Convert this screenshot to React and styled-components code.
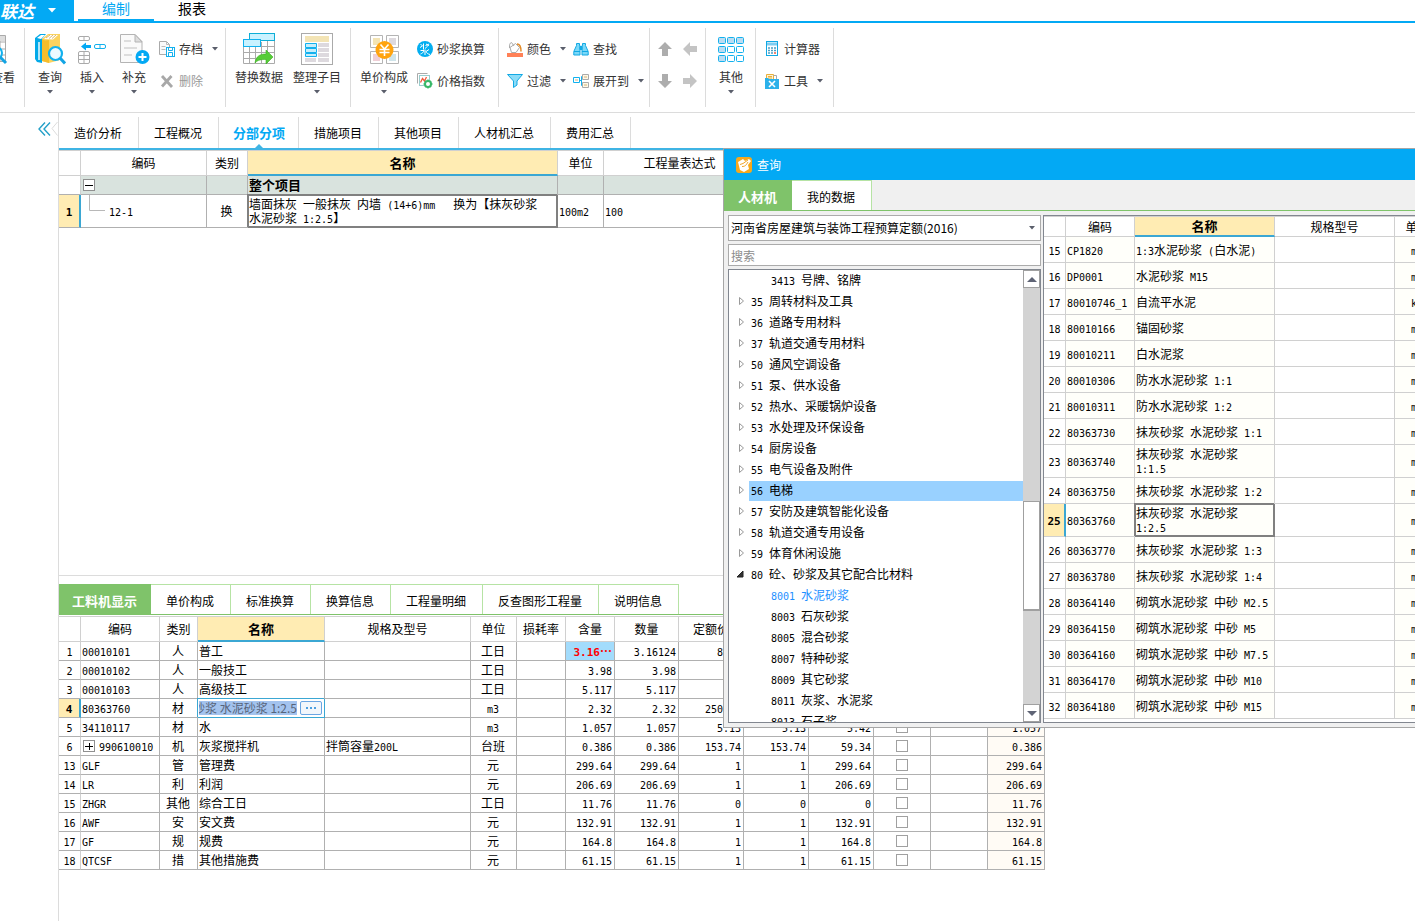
import React, { useEffect, useRef, useState } from 'react';
import styled, { createGlobalStyle, css } from 'styled-components';

const GlobalStyle = createGlobalStyle`
  * {
    box-sizing: border-box;
  }
  body {
    margin: 0;
    background: #fff;
    color: #000;
    font-family: 'Noto Sans CJK SC', sans-serif;
    font-size: 12px;
    line-height: 14px;
  }
  button, input, select {
    font: inherit;
    color: inherit;
    border: 0;
    padding: 0;
    margin: 0;
    background: none;
    border-radius: 0;
    outline: 0;
  }
  ul {
    list-style: none;
    margin: 0;
    padding: 0;
  }
`;

const BLUE = '#03a9f4';
const GREEN = '#7fc36a';
const LIGHT_GREEN = '#b6e3a4';
const YELLOW = '#ffecb3';
const MARK = '#3ba7d3';

const Latin = styled.span`
  font-family: 'DejaVu Sans Mono', monospace;
  font-size: ${({ $bold }) => ($bold ? 11 : 10)}px;
  line-height: 1;
`;

// latin runs use a half-width face so they line up with the hanzi
const Text = ({ children, bold }) =>
  String(children)
    .split(/([\x20-\x7e]+)/)
    .map((part, idx) =>
      idx % 2 ? (
        <Latin key={idx} $bold={bold}>
          {part}
        </Latin>
      ) : (
        part
      )
    );

const Page = styled.div`
  position: relative;
  display: flex;
  flex-direction: column;
  min-height: 100vh;
  overflow: hidden;
`;

/* ---------- top bar ---------- */

const TopBar = styled.header`
  display: flex;
  height: 23px;
  border-bottom: 2px solid ${BLUE};
`;

const Logo = styled.button`
  display: flex;
  align-items: center;
  justify-content: flex-end;
  width: 74px;
  height: 21px;
  padding-right: 18px;
  gap: 14px;
  background: ${BLUE};
  color: #fff;
  font-size: 17px;
  line-height: 20px;
  font-weight: 700;
  font-style: italic;
  white-space: nowrap;
  overflow: hidden;
`;

const TopTab = styled.button`
  width: 76px;
  height: 23px;
  margin-left: ${({ $active }) => ($active ? 4 : 0)}px;
  padding-bottom: 3px;
  font-size: 14px;
  line-height: 16px;
  color: ${({ $active }) => ($active ? BLUE : '#000')};
  border-bottom: ${({ $active }) => ($active ? `4px solid ${BLUE}` : '4px solid transparent')};
`;

/* ---------- ribbon ---------- */

const Ribbon = styled.nav`
  display: flex;
  height: 90px;
  padding: 5px 0;
  border-bottom: 1px solid #dcdcdc;
  overflow: hidden;
  color: #333;
`;

const Group = styled.div`
  display: flex;
  flex: none;
  width: ${({ $width }) => $width}px;
  padding: 5px 0 0 4px;
  border-right: 1px solid #dcdcdc;
`;

const CutGroup = styled(Group)`
  justify-content: flex-end;
  padding-right: 8px;
  overflow: hidden;
`;

const BigButton = styled.button`
  display: flex;
  flex: none;
  flex-direction: column;
  align-items: center;
  width: ${({ $width }) => $width || 42}px;
  height: 68px;
  white-space: nowrap;

  svg {
    flex: none;
  }
  span {
    margin: 5px 0 6px;
    line-height: 14px;
  }
`;

const Column = styled.div`
  display: flex;
  flex-direction: column;
  margin-left: ${({ $gap }) => $gap || 4}px;
`;

const SmallButton = styled.button`
  display: flex;
  align-items: center;
  gap: 4px;
  height: 32px;
  white-space: nowrap;
  color: ${({ disabled }) => (disabled ? '#999' : '#333')};

  span {
    margin-right: 5px;
  }
`;

const ArrowButton = styled.button`
  display: flex;
  align-items: center;
  justify-content: center;
  width: 25px;
  height: 32px;
`;

const ArrowPair = styled.div`
  width: 25px;

  &:first-child {
    margin-left: -2px;
  }
`;

/* ---------- body ---------- */

const Body = styled.div`
  display: flex;
  flex: 1;
`;

const Gutter = styled.aside`
  display: flex;
  align-items: flex-start;
  justify-content: flex-end;
  flex: none;
  width: 59px;
  padding: 8px 0 0;
  border-right: 1px solid #dcdcdc;

  button {
    height: 16px;
  }
`;

const Main = styled.main`
  flex: 1;
  min-width: 0;
`;

const MainTabs = styled.div`
  display: flex;
  height: 37px;
  padding-top: 4px;
  border-bottom: 2px solid #3fb4e4;
`;

const MainTab = styled.button`
  position: relative;
  padding: 0 16px 0 15px;
  height: 31px;
  border-right: 1px solid #dcdcdc;
  line-height: 30px;
  white-space: nowrap;
  ${({ $active }) =>
    $active &&
    css`
      padding: 0 13px 0 14px;
      color: ${BLUE};
      font-size: 13px;
      font-weight: 700;

      &::after {
        content: '';
        position: absolute;
        left: 36px;
        bottom: 0;
        border: 4px solid transparent;
        border-top: 0;
        border-bottom-color: #3fb4e4;
      }
    `}
`;

const UpperPane = styled.section`
  height: 426px;
  border-bottom: 1px solid #dcdcdc;
  overflow: hidden;
`;

const LowerPane = styled.section`
  padding-top: 8px;
`;

const GreenTabs = styled.div`
  display: flex;
  height: 31px;
  margin-bottom: 1px;
  border-bottom: 1px solid ${GREEN};
`;

const GreenTab = styled.button`
  min-width: 68px;
  padding: 2px 16px 0 15px;
  border-top: 1px solid ${LIGHT_GREEN};
  border-right: 1px solid ${LIGHT_GREEN};
  background: #fff;
  white-space: nowrap;
  ${({ $active }) =>
    $active &&
    css`
      padding: 2px 13px 0;
      border-color: ${GREEN};
      background: ${GREEN};
      color: #fff;
      font-size: 13px;
      font-weight: 700;
    `}
`;

const Grid = styled.table`
  table-layout: fixed;
  width: ${({ $width }) => ($width ? `${$width}px` : '100%')};
  border-collapse: separate;
  border-spacing: 0;
  border-top: 1px solid #d0d0d0;
`;

const Head = styled.th`
  height: ${({ $height }) => $height || 25}px;
  padding: 0;
  font-weight: 400;
  white-space: nowrap;
  overflow: hidden;
  border-right: 1px solid #d0d0d0;
  border-bottom: 1px solid #d0d0d0;
  ${({ $active }) =>
    $active &&
    css`
      background: ${YELLOW};
      border-bottom: 2px solid ${MARK};
      font-size: 13px;
      font-weight: 700;
    `}
`;

const Cell = styled.td`
  height: ${({ $height }) => $height || 19}px;
  padding: 0 2px 0 1px;
  overflow: hidden;
  white-space: pre;
  text-align: ${({ $align }) => $align || 'left'};
  background: ${({ $bg }) => $bg || '#fff'};
  border-right: 1px solid ${({ $line }) => $line || '#b0b0b0'};
  border-bottom: 1px solid ${({ $line }) => $line || '#b0b0b0'};
`;

const RowNo = styled(Cell)`
  padding: 0;
  text-align: center;
  background: #fff;
  border-right-color: #d0d0d0;
  ${({ $active }) =>
    $active &&
    css`
      background: ${YELLOW};
      border-right: 2px solid ${MARK};
      font-weight: 700;
    `}
`;

const FocusCell = styled(Cell)`
  border-color: #808080;
  box-shadow: -1px -1px 0 #808080, inset 1px 1px 0 #808080, inset -1px -1px 0 #808080;
`;

const ChangedCell = styled(Cell)`
  background: #a3dcfc;
  color: #f00;
  font-weight: 700;
`;

const SumCell = styled(Cell)`
  font-size: 13px;
  font-weight: 700;
`;

const EditCell = styled(Cell)`
  border-color: ${MARK};
  box-shadow: -1px -1px 0 ${MARK};

  > div {
    display: flex;
    align-items: center;
    gap: 3px;
  }
  input {
    flex: 1;
    min-width: 0;
    height: 14px;
    background: #a3c3ee;
    color: #57647a;
  }
  button {
    display: flex;
    align-items: center;
    justify-content: center;
    gap: 2px;
    width: 22px;
    height: 14px;
    border: 1px solid #6aa5e3;
    border-radius: 2px;
    background: #f2f6fb;
  }
  i {
    width: 2px;
    height: 2px;
    background: #4d9fe0;
  }
`;

const Branch = styled.div`
  display: flex;
  align-items: center;
  gap: 4px;
  padding-left: ${({ $indent }) => $indent || 0}px;
`;

const Toggle = styled.button`
  display: flex;
  flex: none;
  align-items: center;
  justify-content: center;
  width: 12px;
  height: 12px;
  margin-left: 1px;
  border: 1px solid #909090;
  background: #fff;
`;

const Check = styled.input`
  appearance: none;
  display: block;
  width: 12px;
  height: 12px;
  margin: 0 auto;
  border: 1px solid #a0a0a0;
  background: #fff;
`;

/* ---------- query window ---------- */

const Dialog = styled.section`
  position: absolute;
  top: 148px;
  left: 723px;
  right: 0;
  display: flex;
  flex-direction: column;
  height: 580px;
  border: 1px solid #a6a6a6;
  border-right: 0;
  background: #f0f0f0;
  overflow: hidden;
`;

const TitleBar = styled.div`
  display: flex;
  align-items: center;
  gap: 5px;
  flex: none;
  height: 31px;
  padding-left: 12px;
  background: ${BLUE};
  color: #fff;
`;

const Panes = styled.div`
  display: flex;
  flex: 1;
  min-height: 0;
  gap: 2px;
  padding: 3px 0 4px 4px;
`;

const Side = styled.div`
  display: flex;
  flex: none;
  flex-direction: column;
  gap: 3px;
  width: 313px;
`;

const Field = styled.label`
  display: flex;
  align-items: center;
  flex: none;
  height: ${({ $height }) => $height}px;
  padding: 0 5px 0 2px;
  border: 1px solid #ababab;
  background: #fff;

  select, input {
    flex: 1;
    min-width: 0;
    height: 100%;
    appearance: none;
  }
  input::placeholder {
    color: #8c8c8c;
    opacity: 1;
  }
`;

const TreeBox = styled.div`
  display: flex;
  flex: 1;
  min-height: 0;
  border: 1px solid #828790;
  background: #fff;
`;

const Tree = styled.ul`
  flex: 1;
  overflow: hidden;
`;

const Node = styled.li`
  display: flex;
  align-items: flex-end;
  height: 21px;
  padding-left: ${({ $child }) => ($child ? 20 : 0)}px;
  white-space: pre;

  > svg {
    flex: none;
    margin: 0 4px 6px 7px;
  }
  > span {
    flex: 1;
    height: 20px;
    padding-left: ${({ $child }) => ($child ? 22 : 2)}px;
    line-height: 18px;
    color: ${({ $linked }) => ($linked ? '#1e90ff' : '#000')};
    background: ${({ $selected }) => ($selected ? '#99d1ff' : 'transparent')};
  }
`;

const ScrollBar = styled.div`
  display: flex;
  flex: none;
  flex-direction: column;
  width: 17px;
  background: #d3d3d3;

  button {
    display: flex;
    align-items: center;
    justify-content: center;
    height: 18px;
    border: 1px solid #a0a0a0;
    background: #fff;
  }
`;

const Thumb = styled.div`
  height: 110px;
  border: 1px solid #a0a0a0;
  border-bottom-width: 2px;
  background: #fff;
`;

const Track = styled.div`
  flex: ${({ $grow }) => $grow};
`;

const ResultBox = styled.div`
  flex: 1;
  min-width: 0;
  border: 1px solid #828790;
  border-right: 0;
  background: #fff;
  overflow: hidden;
`;

/* ---------- icons ---------- */

const Caret = ({ color = '#5a5e6b' }) => (
  <svg width='6' height='4' viewBox='0 0 6 4'>
    <path d='M0 0h6L3 3.5z' fill={color} />
  </svg>
);

const BooksIcon = () => (
  <svg width='32' height='32' viewBox='0 0 32 32'>
    <path d='M1 5l5-4h6L8 6v24l-5-1-2-3z' fill='#03a9e8' />
    <path d='M3 5l4-3h4L7 6z' fill='#fff' />
    <path d='M5 9v18' stroke='#fff' strokeWidth='1.4' />
    <path d='M8 6l6-5h12v26l-11 3-7-2z' fill='#fbd35f' />
    <path d='M8 6l3 1.500 4-.5v23l-7-2z' fill='#f6bd2c' />
    <path d='M10 6l5-4h9l-5 4.500z' fill='#fff' />
    <path d='M12 5l4-3M15 5.500l4-3.500M18 5.500l4-3.500' stroke='#d2a647' strokeWidth='.8' />
    <circle cx='21.500' cy='20.500' r='6.500' fill='#eefaff' stroke='#12b1ee' strokeWidth='2.200' />
    <path d='M26 25l5 5.500' stroke='#12a4e4' strokeWidth='3' />
  </svg>
);

const InsertIcon = () => (
  <svg width='30' height='32' viewBox='0 0 30 32' fill='none'>
    <rect x='1.500' y='3.500' width='11' height='4' rx='1.500' stroke='#aaa' />
    <path d='M7 3.500v4' stroke='#aaa' />
    <rect x='1.500' y='18.500' width='11' height='12' rx='1.500' stroke='#aaa' />
    <path d='M7 18.500v12M1.500 22.500h11M1.500 26.500h11' stroke='#aaa' />
    <rect x='17.500' y='11.500' width='11' height='4' rx='1.500' stroke='#12b1ee' />
    <path d='M23 11.500v4' stroke='#12b1ee' />
    <path d='M4 13.500l5-4v2.500h5v3H9v2.500z' fill='#03a9f4' />
  </svg>
);

const AddDocIcon = () => (
  <svg width='32' height='32' viewBox='0 0 32 32' fill='none'>
    <path d='M2.500 1.500h14.500l7 7v21h-21.500z' fill='#fafafa' stroke='#b4b4b4' />
    <path d='M17 1.500l7 7.500h-7z' fill='#ddd' stroke='#b4b4b4' />
    <path d='M6 8h7M6 15h13M6 22h8' stroke='#d4d4d4' strokeWidth='1.500' />
    <circle cx='24.500' cy='24' r='7' fill='#03a9f4' />
    <path d='M24.500 20v8M20.500 24h8' stroke='#fff' strokeWidth='2' />
  </svg>
);

const SheetIcon = () => (
  <svg width='30' height='32' viewBox='0 0 30 32' fill='none'>
    <path d='M0 2.500h17.500v26H0M0 9h17M0 16h17M0 22h17M12 3v25' stroke='#aaa' />
    <path d='M0 3h17v5H0z' fill='#ddd' />
    <circle cx='8' cy='20' r='6' fill='#eefaff' stroke='#12b1ee' strokeWidth='2' />
    <path d='M12 24l6 6' stroke='#12a4e4' strokeWidth='3' />
  </svg>
);

const SaveIcon = () => (
  <svg width='16' height='16' viewBox='0 0 16 16' fill='none'>
    <path d='M.5.500h7l3 3v10H.500z' fill='#fafafa' stroke='#aaa' />
    <path d='M7.500.500v3h3M2.500 5.500h4M2.500 8.500h4' stroke='#bbb' />
    <rect x='7.500' y='6.500' width='8' height='9' fill='#fff' stroke='#12b1ee' />
    <path d='M9.500 6.500v3h4v-3M9.500 15v-3.500h4V15' stroke='#12b1ee' />
  </svg>
);

const DeleteIcon = () => (
  <svg width='16' height='16' viewBox='0 0 16 16' fill='none'>
    <path d='M3 3l10 11M12.500 3L3 13.500' stroke='#a8a8a8' strokeWidth='2.800' />
  </svg>
);

const ReplaceIcon = () => (
  <svg width='32' height='32' viewBox='0 0 32 32' fill='none'>
    <path d='M.5 13.500v17h31v-25M.5 19.500h31M.5 25.500h24M6.500 14v17M12.500 14v17M18.500 9v22M24.500 8v23M18.500 13.500h13' stroke='#aaa' />
    <rect x='6.500' y='.5' width='25' height='7' fill='#c9f2ff' stroke='#0eaed6' />
    <rect x='.5' y='6.500' width='17' height='7' fill='#c9f2ff' stroke='#12b1ee' />
    <path d='M12 30c1-7 5-9 11-9v-4l7 7-7 7v-4.500c-4 0-8 0-11 3.500z' fill='#56cc38' stroke='#3bb01f' strokeWidth='.6' />
  </svg>
);

const ArrangeIcon = () => (
  <svg width='32' height='32' viewBox='0 0 32 32' fill='none'>
    <rect x='.5' y='.5' width='31' height='31' fill='#fff' stroke='#aaa' />
    <path d='M4 3h24v6H4z' fill='#f3e4b5' />
    <path d='M17 10h11v4H17zM17 15h11v4H17zM17 20h11v4H17zM4 25h11v4H4zM17 25h11v4H17z' fill='#ddd9de' />
    <path d='M4.500 10.500h11v4h-11zM4.500 15.500h11v4h-11zM4.500 20.500h11v3h-11z' fill='#c6eefc' stroke='#12b1ee' />
  </svg>
);

const PriceIcon = () => (
  <svg width='32' height='32' viewBox='0 0 32 32' fill='none'>
    <path d='M2.500 2.500h12v12h-12zM18.500 2.500h12v12h-12zM2.500 18.500h12v12h-12zM18.500 18.500h12v12h-12z' fill='#fff' stroke='#b4b4b4' />
    <path d='M5 5h7v7H5z' fill='#f3e4b5' />
    <path d='M21 5h7v7h-7z' fill='#ddd9de' />
    <path d='M5 21h7v7H5z' fill='#efcfd6' />
    <path d='M21 21h7v7h-7z' fill='#cfe4ea' />
    <circle cx='16.500' cy='17' r='9' fill='#ffa40f' />
    <path d='M12.500 11.500l4 4.500 4-4.500M11.500 16.500h10M11.500 19.500h10M16.500 16v7' stroke='#fff' strokeWidth='1.600' />
  </svg>
);

const MortarIcon = () => (
  <svg width='16' height='16' viewBox='0 0 16 16' fill='none'>
    <circle cx='8' cy='8' r='8' fill='#03aef0' />
    <path
      d='M3.500 3.500l2 1M3 6.500l2.500-1.500M6.500 2.500v6M8.500 4.500c2-.5 3-1.500 3-1.500s1 1-3.500 4.500M9 3l3 1.500M8 8.500v5.500M3.500 9.500h3.500c-.5 2-2 3-3.500 3.500M12 8.500l-3 2c1 2 2 2.500 4 3'
      stroke='#fff'
    />
  </svg>
);

const IndexIcon = () => (
  <svg width='16' height='16' viewBox='0 0 16 16' fill='none'>
    <path d='M.5 10.500v-10h10' stroke='#aaa' />
    <rect x='2.500' y='2.500' width='10' height='10' fill='#fff' stroke='#9cc' />
    <path d='M3.500 9.500l2-4 2 2.500 2-4' stroke='#f05a3c' strokeWidth='1.300' />
    <circle cx='11' cy='11' r='3' fill='#fff' stroke='#38b768' strokeWidth='2' />
    <path d='M11 6.500v1.500M11 14v1.500M6.500 11H8M14 11h1.500M8 8l1 1M13 13l1 1M14 8l-1 1M8 14l1-1' stroke='#38b768' strokeWidth='1.400' />
  </svg>
);

const PaintIcon = () => (
  <svg width='16' height='16' viewBox='0 0 16 16' fill='none'>
    <path d='M3 6.500l5.500-4 4 4L9 11.500H4.500z' fill='#fff' stroke='#aaa' />
    <path d='M2.500 7c0-3 0-5 2-5.500L7 5' stroke='#aaa' />
    <path d='M10 3c3 0 4 2 4 7.500' stroke='#e48a24' strokeWidth='1.500' />
    <path d='M0 12h16v4H0z' fill='#ff8157' />
  </svg>
);

const FilterIcon = () => (
  <svg width='16' height='16' viewBox='0 0 16 16'>
    <path d='M.5 1.500h15L10 8v4l-3.500 2.500V8z' fill='#8bdcf8' stroke='#12a9e4' />
  </svg>
);

const FindIcon = () => (
  <svg width='16' height='16' viewBox='0 0 16 16'>
    <path d='M3.500 4.500v-2h3v2h.5V14H.800v-3.500zM9 4.500h.5v-2h3v2l2.700 6V14H9z' fill='#7bd8f8' stroke='#12a9e4' />
    <path d='M7 5.500h2v3H7z' fill='#12a9e4' stroke='#12a9e4' />
    <path d='M1 10.500h6M9 10.500h6' stroke='#12a9e4' />
  </svg>
);

const ExpandIcon = () => (
  <svg width='16' height='16' viewBox='0 0 16 16' fill='none'>
    <path d='M6.500 7.500h2M8.500 3.500v9M8.500 3.500h1M8.500 12.500h1' stroke='#12b1ee' />
    <path d='M.5 4.500h6v5h-6z' fill='#fff' stroke='#12b1ee' />
    <path d='M9.500 1.500h6v5h-6zM9.500 9.500h6v5h-6z' fill='#fff8e5' stroke='#aaa' />
    <path d='M2 7h3M11 4h3M11 12h3' stroke='#d2b27c' />
  </svg>
);

const MoveIcon = ({ turn, color }) => (
  <svg width='16' height='16' viewBox='0 0 16 16'>
    <path d='M8 1l7 7h-4v7H5V8H1z' fill={color} transform={`rotate(${turn} 8 8)`} />
  </svg>
);

const OtherIcon = () => (
  <svg width='28' height='32' viewBox='0 0 28 32'>
    {[0, 1, 2].map((row) =>
      [0, 1, 2].map((col) => (
        <rect
          key={`${row}${col}`}
          x={1.5 + col * 9}
          y={4.5 + row * 9}
          width='7'
          height='6'
          rx='1'
          stroke='#12b1ee'
          fill={row === 0 || col === 0 ? '#bcdcf2' : '#fff'}
        />
      ))
    )}
  </svg>
);

const CalcIcon = () => (
  <svg width='16' height='16' viewBox='0 0 16 16' fill='none'>
    <rect x='2.500' y='.5' width='11' height='14' fill='#fff' stroke='#12a9e4' />
    <path d='M3 3h10' stroke='#7fcdf1' strokeWidth='3' />
    <path d='M4 7h2M7 7h2M10 7h2M4 9.500h2M7 9.500h2M10 9.500h2M4 12h2M7 12h2' stroke='#4b9fc4' strokeWidth='1.300' />
    <path d='M10 12h2' stroke='#ef5a43' strokeWidth='1.500' />
  </svg>
);

const ToolIcon = () => (
  <svg width='16' height='16' viewBox='0 0 16 16' fill='none'>
    <path d='M2.500 6V1.500h7V6' fill='#fff3d5' stroke='#e9b03a' />
    <path d='M4 3.500h4M4 5h4' stroke='#e9b03a' />
    <path d='M9.500 2.500h3V6' stroke='#aaa' />
    <path d='M1 5h3l1 1h10v10H1z' fill='#2bb1ea' />
    <path d='M5 8l6 6M11 8l-6 6' stroke='#fff' strokeWidth='1.600' />
  </svg>
);

const CollapseIcon = () => (
  <svg width='20' height='16' viewBox='0 0 20 16' fill='none'>
    <path d='M7 1.500L1 8l6 6.500M12 1.500L6 8l6 6.500' stroke='#24a0c8' strokeWidth='1.400' />
    <path d='M19.500 1L14 7.500l5.500 7' stroke='#dcdcdc' />
  </svg>
);

const WindowIcon = () => (
  <svg width='16' height='16' viewBox='0 0 16 16' fill='none'>
    <rect width='16' height='16' rx='3' fill='#f6a81c' />
    <path d='M2 5l5-3 2 2 4-2 2 2-3 4 1 4-5 3-4-2-1-4z' fill='#fff' />
    <path d='M4 7.500l3-1 5-3.500M6 9.500c3 0 4-1 6-4.500' stroke='#f0a427' />
  </svg>
);

const TreeArrow = ({ open }) => (
  <svg width='9' height='10' viewBox='0 0 9 10'>
    {open ? <path d='M7 2v6H1z' fill='#333' stroke='#222' /> : <path d='M3.500 1.500L7.500 5l-4 3.500z' fill='#fff' stroke='#999' />}
  </svg>
);

const SignIcon = ({ plus }) => (
  <svg width='8' height='8' viewBox='0 0 8 8'>
    <path d={plus ? 'M0 4.500h8M4 1v7' : 'M0 4.500h8'} stroke='#000' shapeRendering='crispEdges' />
  </svg>
);

const BranchLine = () => (
  <svg width='16' height='32' viewBox='0 0 16 32'>
    <path d='M.5 0v15.500H16' fill='none' stroke='#b8b8b8' />
  </svg>
);

/* ---------- data ---------- */

const mainTabs = ['造价分析', '工程概况', '分部分项', '措施项目', '其他项目', '人材机汇总', '费用汇总'];
const detailTabs = ['工料机显示', '单价构成', '标准换算', '换算信息', '工程量明细', '反查图形工程量', '说明信息'];

const upperCols = [22, 126, 41, 310, 46, 152];
const upperHeads = ['', '编码', '类别', '名称', '单位', '工程量表达式', ''];

const detailCols = [22, 79, 38, 127, 146, 46, 49, 49, 64, 65, 65, 65, 57, 57, 57];
const detailHeads = ['', '编码', '类别', '名称', '规格及型号', '单位', '损耗率', '含量', '数量', '定额价', '市场价', '合价', '是否暂估', '锁定数量', '原始含量'];

// no, code, kind, name, spec, unit, amount, quantity, base price, market price, total
const detailRows = [
  ['1', '00010101', '人', '普工', '', '工日', '3.16…', '3.16124', '87.1', '87.1', '275.34', '3.16124'],
  ['2', '00010102', '人', '一般技工', '', '工日', '3.98', '3.98', '134', '134', '533.32', '3.98'],
  ['3', '00010103', '人', '高级技工', '', '工日', '5.117', '5.117', '201', '201', '1028.52', '5.117'],
  ['4', '80363760', '材', '抹灰砂浆 水泥砂浆 1:2.5', '', 'm3', '2.32', '2.32', '250.35', '250.35', '580.81', '2.32'],
  ['5', '34110117', '材', '水', '', 'm3', '1.057', '1.057', '5.13', '5.13', '5.42', '1.057'],
  ['6', '990610010', '机', '灰浆搅拌机', '拌筒容量200L', '台班', '0.386', '0.386', '153.74', '153.74', '59.34', '0.386'],
  ['13', 'GLF', '管', '管理费', '', '元', '299.64', '299.64', '1', '1', '299.64', '299.64'],
  ['14', 'LR', '利', '利润', '', '元', '206.69', '206.69', '1', '1', '206.69', '206.69'],
  ['15', 'ZHGR', '其他', '综合工日', '', '工日', '11.76', '11.76', '0', '0', '0', '11.76'],
  ['16', 'AWF', '安', '安文费', '', '元', '132.91', '132.91', '1', '1', '132.91', '132.91'],
  ['17', 'GF', '规', '规费', '', '元', '164.8', '164.8', '1', '1', '164.8', '164.8'],
  ['18', 'QTCSF', '措', '其他措施费', '', '元', '61.15', '61.15', '1', '1', '61.15', '61.15'],
];

const treeNodes = [
  { label: '3413 号牌、铭牌', child: true },
  { label: '35 周转材料及工具' },
  { label: '36 道路专用材料' },
  { label: '37 轨道交通专用材料' },
  { label: '50 通风空调设备' },
  { label: '51 泵、供水设备' },
  { label: '52 热水、采暖锅炉设备' },
  { label: '53 水处理及环保设备' },
  { label: '54 厨房设备' },
  { label: '55 电气设备及附件' },
  { label: '56 电梯', selected: true },
  { label: '57 安防及建筑智能化设备' },
  { label: '58 轨道交通专用设备' },
  { label: '59 体育休闲设施' },
  { label: '80 砼、砂浆及其它配合比材料', open: true },
  { label: '8001 水泥砂浆', child: true, linked: true },
  { label: '8003 石灰砂浆', child: true },
  { label: '8005 混合砂浆', child: true },
  { label: '8007 特种砂浆', child: true },
  { label: '8009 其它砂浆', child: true },
  { label: '8011 灰浆、水泥浆', child: true },
  { label: '8013 石子浆', child: true },
];

const resultCols = [22, 69, 140, 120, 46];
const resultHeads = ['', '编码', '名称', '规格型号', '单位', ''];
const resultRows = [
  ['15', 'CP1820', '1:3水泥砂浆 (白水泥)', 'm3'],
  ['16', 'DP0001', '水泥砂浆 M15', 'm3'],
  ['17', '80010746_1', '自流平水泥', 'kg'],
  ['18', '80010166', '锚固砂浆', 'm3'],
  ['19', '80010211', '白水泥浆', 'm3'],
  ['20', '80010306', '防水水泥砂浆 1:1', 'm3'],
  ['21', '80010311', '防水水泥砂浆 1:2', 'm3'],
  ['22', '80363730', '抹灰砂浆 水泥砂浆 1:1', 'm3'],
  ['23', '80363740', '抹灰砂浆 水泥砂浆\n1:1.5', 'm3'],
  ['24', '80363750', '抹灰砂浆 水泥砂浆 1:2', 'm3'],
  ['25', '80363760', '抹灰砂浆 水泥砂浆\n1:2.5', 'm3'],
  ['26', '80363770', '抹灰砂浆 水泥砂浆 1:3', 'm3'],
  ['27', '80363780', '抹灰砂浆 水泥砂浆 1:4', 'm3'],
  ['28', '80364140', '砌筑水泥砂浆 中砂 M2.5', 'm3'],
  ['29', '80364150', '砌筑水泥砂浆 中砂 M5', 'm3'],
  ['30', '80364160', '砌筑水泥砂浆 中砂 M7.5', 'm3'],
  ['31', '80364170', '砌筑水泥砂浆 中砂 M10', 'm3'],
  ['32', '80364180', '砌筑水泥砂浆 中砂 M15', 'm3'],
];

/* ---------- components ---------- */

const Big = ({ icon, label, width, arrow = true }) => (
  <BigButton $width={width}>
    {icon}
    <span>{label}</span>
    {arrow && <Caret />}
  </BigButton>
);

const Small = ({ icon, label, arrow, disabled }) => (
  <SmallButton disabled={disabled}>
    {icon}
    <span>{label}</span>
    {arrow && <Caret />}
  </SmallButton>
);

const Cols = ({ widths, filler }) => (
  <colgroup>
    {widths.map((width, idx) => (
      <col key={idx} width={width} />
    ))}
    {filler && <col />}
  </colgroup>
);

const HeadRow = ({ labels, height }) => (
  <thead>
    <tr>
      {labels.map((label, idx) => (
        <Head key={idx} $height={height} $active={label === '名称'}>
          {label}
        </Head>
      ))}
    </tr>
  </thead>
);

const RibbonBar = () => (
  <Ribbon>
    <CutGroup $width={25}>
      <Big icon={<SheetIcon />} label='查看' width={26} arrow={false} />
    </CutGroup>
    <Group $width={201}>
      <Big icon={<BooksIcon />} label='查询' />
      <Big icon={<InsertIcon />} label='插入' />
      <Big icon={<AddDocIcon />} label='补充' />
      <Column>
        <Small icon={<SaveIcon />} label='存档' arrow />
        <Small icon={<DeleteIcon />} label='删除' disabled />
      </Column>
    </Group>
    <Group $width={125}>
      <Big icon={<ReplaceIcon />} label='替换数据' width={58} arrow={false} />
      <Big icon={<ArrangeIcon />} label='整理子目' width={58} />
    </Group>
    <Group $width={148}>
      <Big icon={<PriceIcon />} label='单价构成' width={58} />
      <Column>
        <Small icon={<MortarIcon />} label='砂浆换算' />
        <Small icon={<IndexIcon />} label='价格指数' />
      </Column>
    </Group>
    <Group $width={151}>
      <Column>
        <Small icon={<PaintIcon />} label='颜色' arrow />
        <Small icon={<FilterIcon />} label='过滤' arrow />
      </Column>
      <Column $gap={7}>
        <Small icon={<FindIcon />} label='查找' />
        <Small icon={<ExpandIcon />} label='展开到' arrow />
      </Column>
    </Group>
    <Group $width={56}>
      <ArrowPair>
        <ArrowButton aria-label='上移'>
          <MoveIcon turn={0} color='#adadad' />
        </ArrowButton>
        <ArrowButton aria-label='下移'>
          <MoveIcon turn={180} color='#adadad' />
        </ArrowButton>
      </ArrowPair>
      <ArrowPair>
        <ArrowButton aria-label='升级'>
          <MoveIcon turn={-90} color='#c4c4c4' />
        </ArrowButton>
        <ArrowButton aria-label='降级'>
          <MoveIcon turn={90} color='#c4c4c4' />
        </ArrowButton>
      </ArrowPair>
    </Group>
    <Group $width={50}>
      <Big icon={<OtherIcon />} label='其他' />
    </Group>
    <Group $width={78}>
      <Column>
        <Small icon={<CalcIcon />} label='计算器' />
        <Small icon={<ToolIcon />} label='工具' arrow />
      </Column>
    </Group>
  </Ribbon>
);

const ItemGrid = () => (
  <Grid>
    <Cols widths={upperCols} filler />
    <HeadRow labels={upperHeads} />
    <tbody>
      <tr>
        <RowNo />
        <Cell $bg='#d9e3de'>
          <Toggle aria-label='折叠'>
            <SignIcon />
          </Toggle>
        </Cell>
        <Cell $bg='#d9e3de' />
        <SumCell $bg='#d9e3de'>整个项目</SumCell>
        <Cell $bg='#d9e3de' />
        <Cell $bg='#d9e3de' />
        <Cell $bg='#d9e3de' />
      </tr>
      <tr>
        <RowNo $active>
          <Text bold>1</Text>
        </RowNo>
        <Cell $height={33}>
          <Branch $indent={7}>
            <BranchLine />
            <span>
              <Text>12-1</Text>
            </span>
          </Branch>
        </Cell>
        <Cell $align='center'>换</Cell>
        <FocusCell>
          <Text>{'墙面抹灰 一般抹灰 内墙 (14+6)mm   换为【抹灰砂浆\n水泥砂浆 1:2.5】'}</Text>
        </FocusCell>
        <Cell>
          <Text>100m2</Text>
        </Cell>
        <Cell>
          <Text>100</Text>
        </Cell>
        <Cell />
      </tr>
    </tbody>
  </Grid>
);

const NameEditor = ({ value }) => {
  const inputRef = useRef(null);

  // keep the end of a long name in view
  useEffect(() => {
    inputRef.current.scrollLeft = inputRef.current.scrollWidth;
  }, []);

  return (
    <EditCell>
      <div>
        <input ref={inputRef} aria-label='名称' defaultValue={value} />
        <button aria-label='选择材料'>
          <i />
          <i />
          <i />
        </button>
      </div>
    </EditCell>
  );
};

const DetailRow = ({ row }) => {
  const [no, code, kind, name, spec, unit, amount, quantity, base, market, total, origin] = row;
  const active = no === '4';
  const AmountCell = no === '1' ? ChangedCell : Cell;

  return (
    <tr>
      <RowNo $active={active}>
        <Text bold={active}>{no}</Text>
      </RowNo>
      <Cell>
        {no === '6' ? (
          <Branch>
            <Toggle aria-label='展开'>
              <SignIcon plus />
            </Toggle>
            <span>
              <Text>{code}</Text>
            </span>
          </Branch>
        ) : (
          <Text>{code}</Text>
        )}
      </Cell>
      <Cell $align='center'>{kind}</Cell>
      {active ? <NameEditor value={name} /> : <Cell>{name}</Cell>}
      <Cell>
        <Text>{spec}</Text>
      </Cell>
      <Cell $align='center'>
        <Text>{unit}</Text>
      </Cell>
      <Cell />
      <AmountCell $align='right'>
        <Text bold={no === '1'}>{amount}</Text>
      </AmountCell>
      {[quantity, base, market, total].map((value, idx) => (
        <Cell key={idx} $align='right'>
          <Text>{value}</Text>
        </Cell>
      ))}
      <Cell>
        <Check type='checkbox' aria-label='是否暂估' />
      </Cell>
      <Cell />
      <Cell $align='right' $bg='#fffbf5'>
        <Text>{origin}</Text>
      </Cell>
    </tr>
  );
};

const ResultRow = ({ row }) => {
  const [no, code, name, unit] = row;
  const active = no === '25';
  const NameCell = active ? FocusCell : Cell;
  const line = '#d0d0d0';
  const bg = '#fffffa';

  return (
    <tr>
      <RowNo $active={active} $line={line} $height={name.includes('\n') ? 33 : 26}>
        <Text bold={active}>{no}</Text>
      </RowNo>
      <Cell $line={line} $bg={bg}>
        <Text>{code}</Text>
      </Cell>
      <NameCell $line={line} $bg={bg}>
        <Text>{name}</Text>
      </NameCell>
      <Cell $line={line} />
      <Cell $line={line} $bg={bg} $align='center'>
        <Text>{unit}</Text>
      </Cell>
      <Cell $line={line} />
    </tr>
  );
};

const QueryDialog = () => {
  const [tab, setTab] = useState('人材机');

  return (
    <Dialog>
      <TitleBar>
        <WindowIcon />
        查询
      </TitleBar>
      <GreenTabs>
        {['人材机', '我的数据'].map((label) => (
          <GreenTab key={label} $active={label === tab} onClick={() => setTab(label)}>
            {label}
          </GreenTab>
        ))}
      </GreenTabs>
      <Panes>
        <Side>
          <Field $height={26}>
            <select aria-label='定额库'>
              <option>河南省房屋建筑与装饰工程预算定额(2016)</option>
            </select>
            <Caret />
          </Field>
          <Field $height={22}>
            <input aria-label='搜索' placeholder='搜索' />
          </Field>
          <TreeBox>
            <Tree>
              {treeNodes.map(({ label, child, open, selected, linked }) => (
                <Node key={label} $child={child} $selected={selected} $linked={linked}>
                  {!child && <TreeArrow open={open} />}
                  <span>
                    <Text>{label}</Text>
                  </span>
                </Node>
              ))}
            </Tree>
            <ScrollBar>
              <button aria-label='向上滚动'>
                <svg width='10' height='5' viewBox='0 0 10 5'>
                  <path d='M0 5l5-5 5 5z' fill='#5f6475' />
                </svg>
              </button>
              <Track $grow={214} />
              <Thumb />
              <Track $grow={93} />
              <button aria-label='向下滚动'>
                <svg width='10' height='5' viewBox='0 0 10 5'>
                  <path d='M0 0l5 5 5-5z' fill='#5f6475' />
                </svg>
              </button>
            </ScrollBar>
          </TreeBox>
        </Side>
        <ResultBox>
          <Grid>
            <Cols widths={resultCols} filler />
            <HeadRow labels={resultHeads} height={20} />
            <tbody>
              {resultRows.map((row) => (
                <ResultRow key={row[0]} row={row} />
              ))}
            </tbody>
          </Grid>
        </ResultBox>
      </Panes>
    </Dialog>
  );
};

function App() {
  const [mainTab, setMainTab] = useState('分部分项');
  const [detailTab, setDetailTab] = useState('工料机显示');

  return (
    <Page>
      <GlobalStyle />
      <TopBar>
        <Logo>
          联达
          <svg width='8' height='5' viewBox='0 0 8 5'>
            <path d='M0 0h8L4 4.500z' fill='#fff' />
          </svg>
        </Logo>
        <TopTab $active>编制</TopTab>
        <TopTab>报表</TopTab>
      </TopBar>
      <RibbonBar />
      <Body>
        <Gutter>
          <button aria-label='收起'>
            <CollapseIcon />
          </button>
        </Gutter>
        <Main>
          <MainTabs>
            {mainTabs.map((label) => (
              <MainTab key={label} $active={label === mainTab} onClick={() => setMainTab(label)}>
                {label}
              </MainTab>
            ))}
          </MainTabs>
          <UpperPane>
            <ItemGrid />
          </UpperPane>
          <LowerPane>
            <GreenTabs>
              {detailTabs.map((label) => (
                <GreenTab key={label} $active={label === detailTab} onClick={() => setDetailTab(label)}>
                  {label}
                </GreenTab>
              ))}
            </GreenTabs>
            <Grid $width={986}>
              <Cols widths={detailCols} />
              <HeadRow labels={detailHeads} />
              <tbody>
                {detailRows.map((row) => (
                  <DetailRow key={row[0]} row={row} />
                ))}
              </tbody>
            </Grid>
          </LowerPane>
        </Main>
      </Body>
      <QueryDialog />
    </Page>
  );
}

export default App;
